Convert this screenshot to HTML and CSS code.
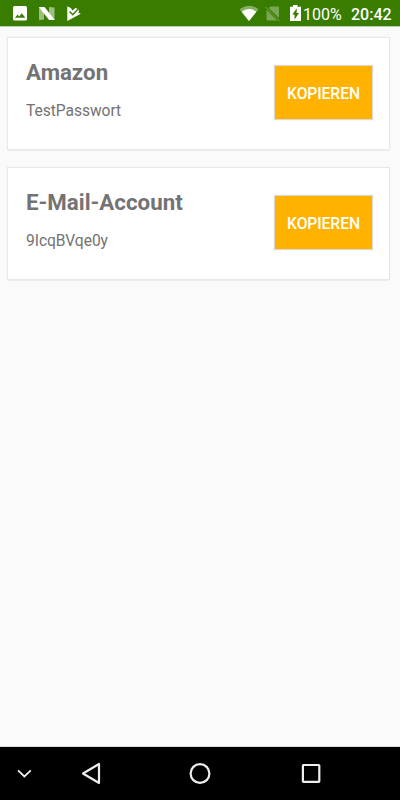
FILE: index.html
```html
<!DOCTYPE html>
<html lang="de">
<head>
<meta charset="utf-8">
<title>Passwörter</title>
<link rel="stylesheet" href="styles.css">
</head>
<body>
<header class="status">
  <svg class="status-left" width="90" height="26" viewBox="0 0 90 26">
    <path fill="#fff" fill-rule="evenodd" d="M14.5 6h11q1.500 0 1.500 1.500v11.500q0 1.500-1.500 1.500h-11q-1.500 0-1.500-1.500v-11.500q0-1.500 1.500-1.500zM15 17.700h10.300l-3.500-4.400-2.600 3.300-1.700-2z"/>
    <path fill="#fff" opacity=".5" d="M39 7.500l5 4v8l-5 .7zM49 7l5.500.6v12.400l-5.500-4z"/>
    <path fill="#fff" d="M38.800 7h5.700l10.300 13h-5.700z"/>
    <path fill="#fff" d="M67.300 6.200l3.500 1.900 1.700 2.400 3-2.500 3 1 .5 2.500-1 1 2.800 1.200-13.500 7.200z"/>
    <path fill="none" stroke="#387c00" stroke-width="1.500" d="M69.500 11.500l3.300 3.200 6.200-6.700"/>
  </svg>
  <div class="status-right">
    <svg width="64" height="26" viewBox="238 0 64 26">
      <path fill="#fff" opacity=".4" d="M239.500 9.200q9.500-7 19 0l-9.500 11.800z"/>
      <path fill="#fff" d="M241.600 11.700q7.400-5.200 14.800 0l-7.400 9.300z"/>
      <path fill="#fff" opacity=".33" d="M270.500 6.500h7.500q1 0 1 1v10.500l-10.300-10zM266.500 9.800l10.500 10.700h-9.500q-1 0-1-1z"/>
      <path fill="none" stroke="#fff" opacity=".33" d="M265.800 7.200l13.500 13.800"/>
      <path fill="#fff" d="M293 5h4.500v1.700h3.500v14.300h-11v-14.300h3z"/>
      <path fill="#387c00" d="M296.700 8.500v4.500h2.300l-4.500 6.500v-5h-2.300z"/>
    </svg>
    <span class="percent">100%</span>
    <span class="clock">20:42</span>
  </div>
</header>
<main class="list">
  <section class="card">
    <div>
      <h2 class="title">Amazon</h2>
      <p class="password">TestPasswort</p>
    </div>
    <button class="copy">KOPIEREN</button>
  </section>
  <section class="card">
    <div>
      <h2 class="title">E-Mail-Account</h2>
      <p class="password">9IcqBVqe0y</p>
    </div>
    <button class="copy">KOPIEREN</button>
  </section>
</main>
<nav class="navbar">
  <svg width="400" height="53" viewBox="0 747 400 53" fill="none" stroke="#eee" stroke-width="2.200">
    <path stroke-width="1.800" d="M18 770.300l6.400 6.200 6.400-6.200"/>
    <path stroke-linejoin="round" d="M99 764v19l-16-9.500z"/>
    <circle cx="200" cy="773.500" r="9.400"/>
    <rect x="302.900" y="765" width="16.400" height="16.800" rx=".5"/>
  </svg>
</nav>
</body>
</html>
```
FILE: styles.css
```css
* { box-sizing: border-box; }
body {
  margin: 0;
  height: 800px;
  display: flex;
  flex-direction: column;
  background: #fafafa;
  font-family: Roboto, sans-serif;
  color: #737373;
  overflow: hidden;
}
svg { display: block; flex: none; }
.status {
  height: 26px;
  flex: none;
  display: flex;
  justify-content: space-between;
  background: #387c00;
  color: #fff;
  box-shadow: 0 1px 0 #b9cfaa;
}
.status-right {
  display: flex;
  width: 162px;
  line-height: 29px;
  white-space: nowrap;
}
.percent { width: 49px; padding-left: 1px; font-size: 16px; }
.clock { font-size: 16px; font-weight: 500; }
.list {
  flex: 1;
  display: flex;
  flex-direction: column;
  gap: 19px;
  padding: 12px 11px 0 8px;
}
.card {
  height: 111px;
  display: flex;
  justify-content: space-between;
  padding: 19px 17px 0 18px;
  background: #fff;
  box-shadow: 0 0 1px 1px #e8e8e8, 0 1px 1px rgba(0, 0, 0, .3);
}
.title {
  margin: 0;
  font-size: 22.3px;
  line-height: 30px;
  font-weight: 700;
}
.password {
  margin: 14px 0 0;
  font-size: 15.600px;
  letter-spacing: -.05px;
  line-height: 20px;
}
.copy {
  width: 97px;
  height: 53px;
  margin: 9px 0 0;
  padding: 2px 0 0;
  border: 0;
  background: #ffb300;
  color: #fff;
  font: 500 15.700px Roboto, sans-serif;
  letter-spacing: -.1px;
  box-shadow: 0 0 1px 1px #ddd9d2;
}
.navbar {
  height: 53px;
  flex: none;
  background: #000;
  box-shadow: 0 -1px 0 #ddd;
}
```
